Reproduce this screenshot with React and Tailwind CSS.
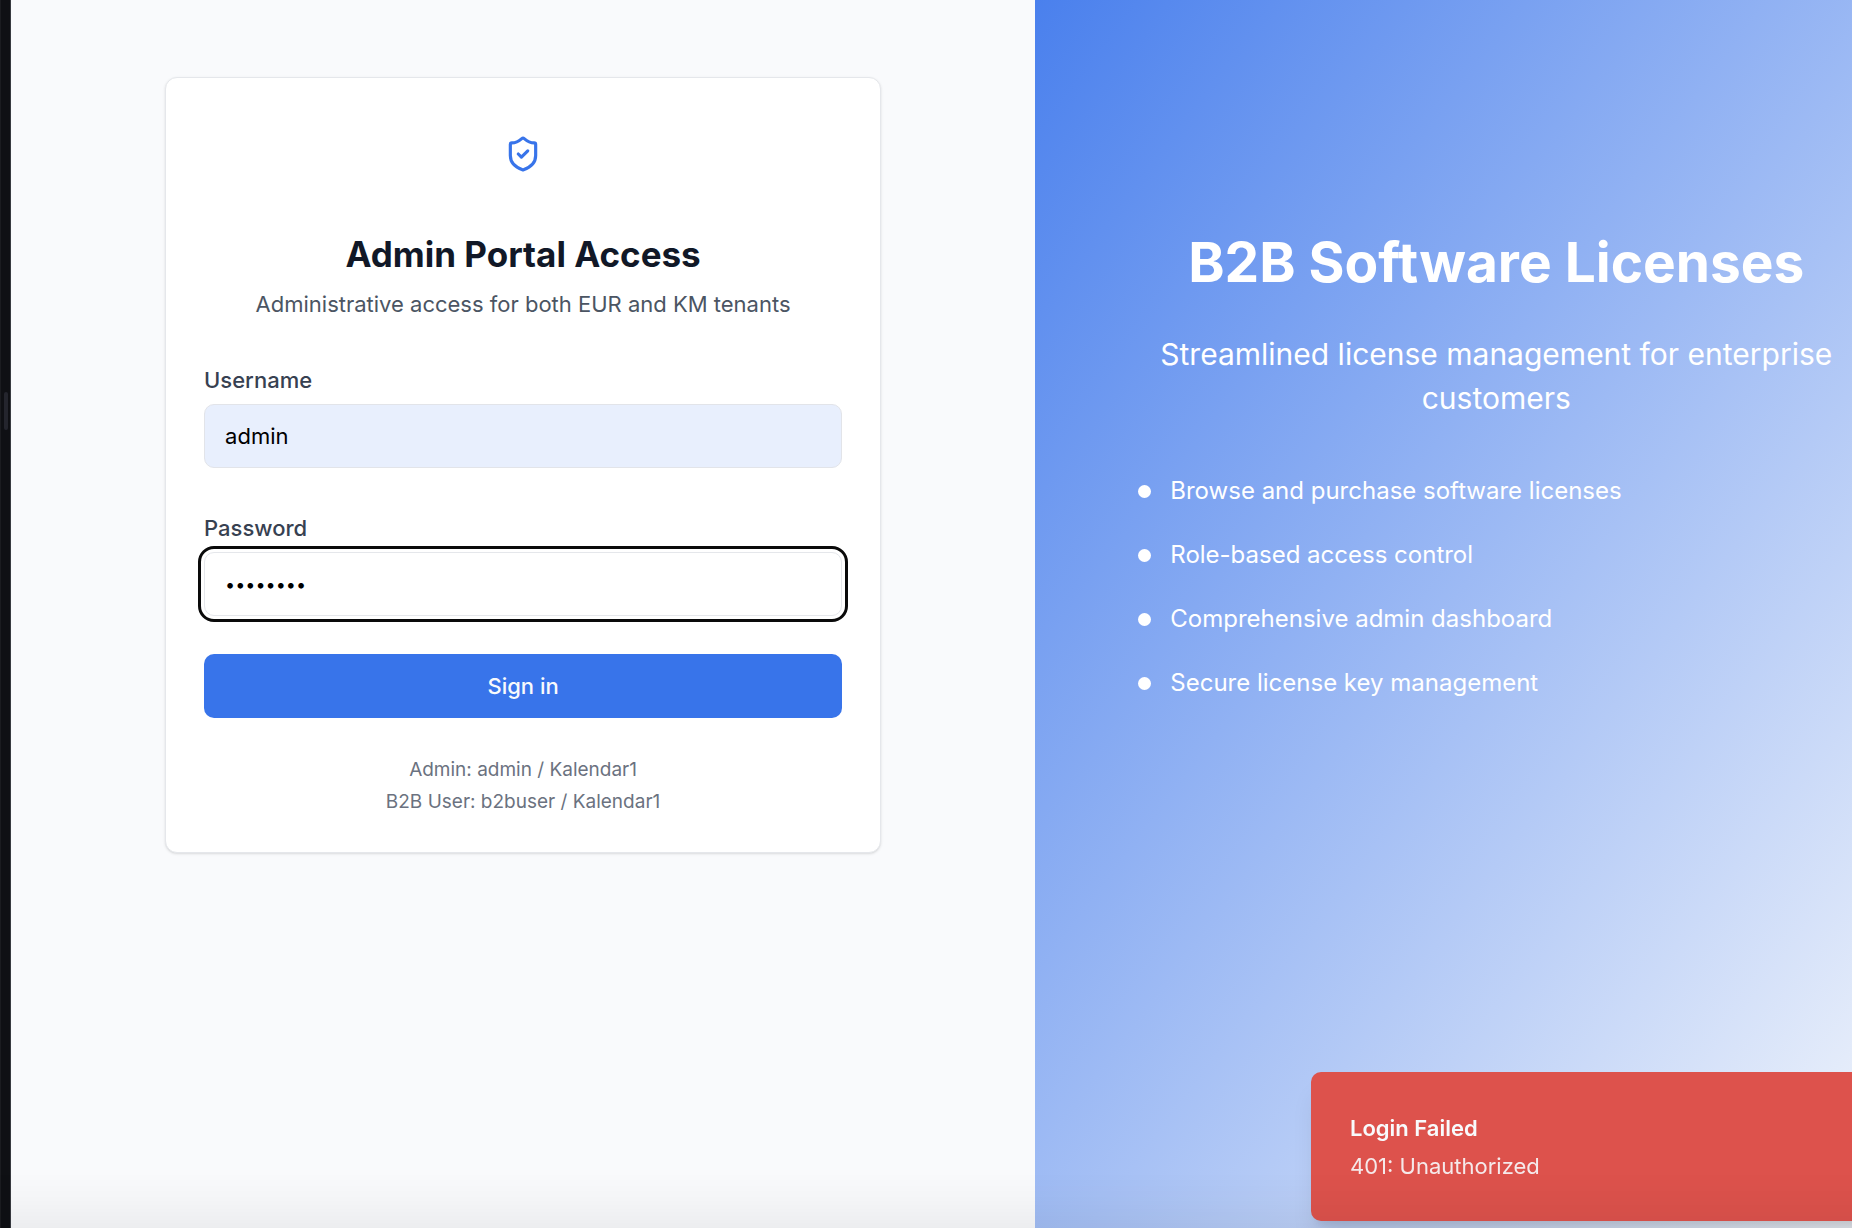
import { useState } from "react";
import { ShieldCheck } from "lucide-react";

const features = [
  "Browse and purchase software licenses",
  "Role-based access control",
  "Comprehensive admin dashboard",
  "Secure license key management",
];

function ResizeRail() {
  return (
    <div className="flex w-[11px] shrink-0 flex-col border-l border-r border-l-[#1b1c20] border-r-[#383a40] bg-[#0f1014] pt-[392px]">
      <div className="ml-[3px] h-[38px] w-1 rounded-full bg-[#24252d]" />
    </div>
  );
}

function LoginCard() {
  const [username, setUsername] = useState("admin");
  const [password, setPassword] = useState("Kalendar");
  return (
    <div className="w-full max-w-[716px] rounded-xl border border-[#e5e7eb] bg-white px-[38px] pt-[37px] pb-[34px] shadow-sm">
      <div className="flex flex-col items-center text-center">
        <div className="flex size-[78px] items-center justify-center">
          <ShieldCheck className="size-[38px] text-[#3874ea]" strokeWidth={2} />
        </div>
        <h1 className="mt-9 text-[35px] leading-[51px] font-bold text-[#111827]">Admin Portal Access</h1>
        <p className="mt-2 text-[22px] leading-8 text-[#4b5563]">Administrative access for both EUR and KM tenants</p>
      </div>
      <form className="mt-11 flex flex-col" onSubmit={(e) => e.preventDefault()}>
        <label htmlFor="username" className="text-[22px] leading-8 font-medium text-[#374151]">Username</label>
        <input
          id="username"
          type="text"
          value={username}
          onChange={(e) => setUsername(e.target.value)}
          className="mt-2 h-16 w-full rounded-[10px] border border-[#e2e4e9] bg-[#e8effd] px-5 text-[22px] text-black outline-none"
        />
        <label htmlFor="password" className="mt-11 text-[22px] leading-8 font-medium text-[#374151]">Password</label>
        <input
          id="password"
          type="password"
          value={password}
          onChange={(e) => setPassword(e.target.value)}
          className="mt-2 h-16 w-full rounded-[10px] border border-[#e5e7eb] bg-white px-5 text-[18px] text-black outline-3 outline-offset-3 outline-[#0a0a0a]"
        />
        <button type="submit" className="mt-[38px] h-16 w-full rounded-[10px] bg-[#3874ea] text-[22px] font-medium text-[#f8fafc]">
          Sign in
        </button>
      </form>
      <div className="mt-9 text-center text-[19px] leading-8 text-[#6b7280]">
        <p>Admin: admin / Kalendar1</p>
        <p>B2B User: b2buser / Kalendar1</p>
      </div>
    </div>
  );
}

function Hero() {
  return (
    <section className="flex w-[49.8%] shrink-0 flex-col items-center bg-linear-to-br/srgb from-[#4a80ed] to-[#fafbfc] pt-[226px] text-white">
      <div className="w-full max-w-[716px]">
        <h2 className="text-center text-[55px] leading-[72px] font-bold [font-variant-ligatures:none]">B2B Software Licenses</h2>
        <p className="mt-[34px] text-center text-[30px] leading-11">Streamlined license management for enterprise customers</p>
        <ul className="mt-[51px] flex flex-col gap-6 text-[24px] leading-10 [font-variant-ligatures:none]">
          {features.map((feature) => (
            <li key={feature} className="flex items-center gap-[19px]">
              <span className="size-[13px] rounded-full bg-white" />
              {feature}
            </li>
          ))}
        </ul>
      </div>
    </section>
  );
}

function Toast() {
  return (
    <div role="alert" className="fixed -right-20 bottom-[7px] w-[621px] rounded-[10px] bg-[#dd524c] px-[39px] pt-10 pb-[39px] text-[#f8fafc] shadow-xl">
      <p className="text-[22px] leading-8 font-semibold">Login Failed</p>
      <p className="mt-1.5 text-[22px] leading-8 opacity-90">401: Unauthorized</p>
    </div>
  );
}

export default function App() {
  return (
    <main className="flex min-h-screen overflow-hidden bg-[#f9fafc] font-['Inter',sans-serif]">
      <ResizeRail />
      <section className="flex w-[55.3%] shrink-0 flex-col items-center pt-[77px]">
        <LoginCard />
      </section>
      <Hero />
      <Toast />
      <div className="pointer-events-none fixed inset-x-0 bottom-0 h-14 bg-linear-to-b from-transparent via-black/2 to-black/5" />
    </main>
  );
}
